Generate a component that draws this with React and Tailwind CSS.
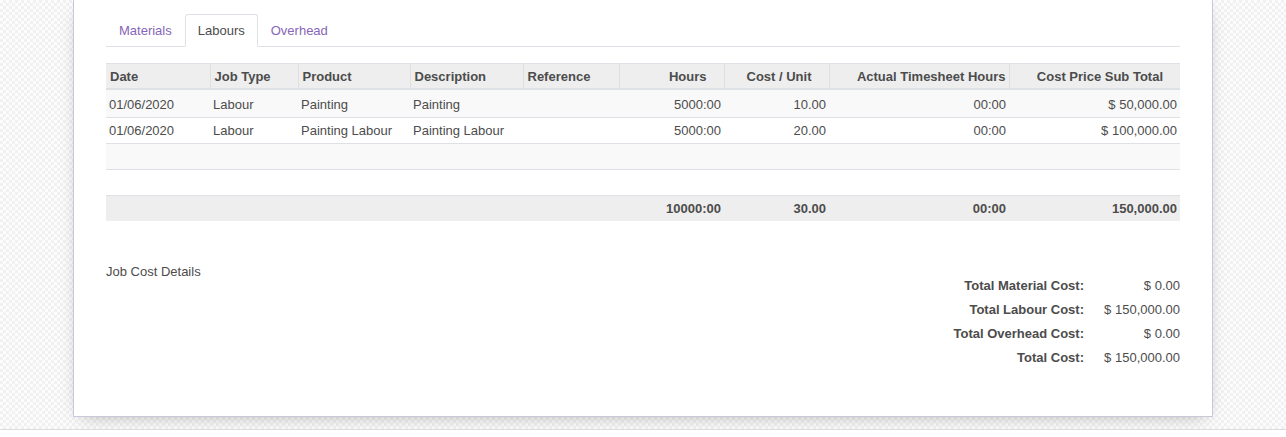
import React from 'react';

// Folha de custos (aba Labours) no estilo de formulário Odoo
const columns = [
    { key: 'date', label: 'Date', width: 'w-[104px]', align: 'left' },
    { key: 'jobType', label: 'Job Type', width: 'w-[88px]', align: 'left' },
    { key: 'product', label: 'Product', width: 'w-[112px]', align: 'left' },
    { key: 'description', label: 'Description', width: 'w-[113px]', align: 'left' },
    { key: 'reference', label: 'Reference', width: 'w-[96px]', align: 'left' },
    { key: 'hours', label: 'Hours', width: 'w-[105px]', align: 'right' },
    { key: 'cost', label: 'Cost / Unit', width: 'w-[105px]', align: 'right' },
    { key: 'actual', label: 'Actual Timesheet Hours', width: 'w-[180px]', align: 'right' },
    { key: 'subtotal', label: 'Cost Price Sub Total', width: 'w-[171px]', align: 'right' },
];

const rows = [
    { date: '01/06/2020', jobType: 'Labour', product: 'Painting', description: 'Painting', reference: '', hours: '5000:00', cost: '10.00', actual: '00:00', subtotal: '$ 50,000.00' },
    { date: '01/06/2020', jobType: 'Labour', product: 'Painting Labour', description: 'Painting Labour', reference: '', hours: '5000:00', cost: '20.00', actual: '00:00', subtotal: '$ 100,000.00' },
];

const totals = { hours: '10000:00', cost: '30.00', actual: '00:00', subtotal: '150,000.00' };

const summary = [
    ['Total Material Cost:', '$ 0.00'],
    ['Total Labour Cost:', '$ 150,000.00'],
    ['Total Overhead Cost:', '$ 0.00'],
    ['Total Cost:', '$ 150,000.00'],
];

const tabs = ['Materials', 'Labours', 'Overhead'];

const App = () => {
    return (
        <div className="min-h-[437px] bg-[repeating-conic-gradient(#f1f1f1_0_25%,#fcfcfc_0_50%)] bg-[length:6px_6px] font-['Liberation_Sans',Arial,sans-serif] text-[13px] text-[#4c4c4c]">
            <div className="mx-auto w-[1140px] bg-white border-x border-b border-[#c9c7d8] shadow-[0_5px_18px_-8px_rgba(0,0,0,0.35)] px-[32px] pt-[14px] pb-[46px]">
                {/* abas */}
                <ul className="flex border-b border-[#dee2e6]">
                    {tabs.map((t) => (
                        <li key={t} className="-mb-px">
                            {t === 'Labours' ? (
                                <span className="block px-[12px] py-[6px] leading-[19px] bg-white border border-[#dee2e6] border-b-white rounded-t-[3px] text-[#4c4c4c]">{t}</span>
                            ) : (
                                <span className="block px-[12px] py-[6px] leading-[19px] border border-transparent text-[#8666b8]">{t}</span>
                            )}
                        </li>
                    ))}
                </ul>

                {/* tabela de mão de obra */}
                <table className="mt-[16px] w-full table-fixed border-collapse">
                    <colgroup>
                        {columns.map((c) => <col key={c.key} className={c.width} />)}
                    </colgroup>
                    <thead>
                        <tr className="bg-[#eeeeee] border-t border-[#dee2e6] border-b-2 border-b-[#dee2e6]">
                            {columns.map((c, i) => (
                                <th
                                    key={c.key}
                                    className={`h-[25px] pt-[1px] font-bold whitespace-nowrap ${i > 0 ? 'border-l border-[#e0e0e0]' : ''} ${c.align === 'right' ? (c.key === 'actual' ? 'text-right pr-[3px]' : 'text-right pr-[17px]') : 'text-left pl-[4px]'}`}
                                >
                                    {c.label}
                                </th>
                            ))}
                        </tr>
                    </thead>
                    <tbody>
                        {rows.map((r, idx) => (
                            <tr key={idx} className={`border-b border-[#dee2e6] ${idx % 2 === 0 ? 'bg-[#f9f9f9]' : 'bg-white'}`}>
                                {columns.map((c) => (
                                    <td key={c.key} className={`${idx === 0 ? 'h-[29px] pt-[2px]' : 'h-[26px]'} whitespace-nowrap ${c.align === 'right' ? 'text-right pr-[3px]' : 'text-left pl-[3px]'}`}>
                                        {r[c.key]}
                                    </td>
                                ))}
                            </tr>
                        ))}
                        <tr className="border-b border-[#dee2e6] bg-[#f9f9f9]"><td colSpan={9} className="h-[26px]" /></tr>
                        <tr className="border-b border-[#dee2e6] bg-white"><td colSpan={9} className="h-[26px]" /></tr>
                    </tbody>
                    <tfoot>
                        <tr className="bg-[#eeeeee] font-bold">
                            {columns.map((c) => (
                                <td key={c.key} className="h-[25px] text-right pr-[3px] whitespace-nowrap">
                                    {totals[c.key] ?? ''}
                                </td>
                            ))}
                        </tr>
                    </tfoot>
                </table>

                {/* resumo de custos */}
                <div className="mt-[41px] flex justify-between items-start">
                    <div className="leading-[19px]">Job Cost Details</div>
                    <div className="mt-[12px] grid grid-cols-[auto_96px]">
                        {summary.map(([label, value]) => (
                            <React.Fragment key={label}>
                                <div className="text-right font-bold leading-[24px]">{label}</div>
                                <div className="text-right leading-[24px]">{value}</div>
                            </React.Fragment>
                        ))}
                    </div>
                </div>
            </div>
            <div className="h-[12px]" />
            <div className="h-[8px] border-t border-[#dcdcdc] bg-white" />
        </div>
    );
};

export default App;
